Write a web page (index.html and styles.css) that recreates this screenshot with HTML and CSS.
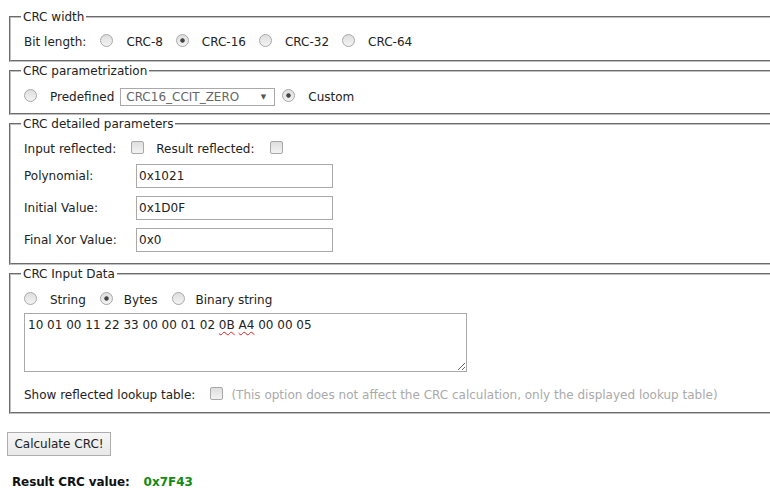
FILE: index.html
```html
<!DOCTYPE html>
<html>
<head>
<meta charset="utf-8">
<link rel="stylesheet" href="styles.css">
</head>
<body>
<fieldset class="box box-width">
  <legend>CRC width</legend>
  <div class="row">
    <span class="lbl">Bit length:</span>
    <input type="radio" class="radio first" name="w"><span>CRC-8</span>
    <input type="radio" class="radio" name="w" checked><span>CRC-16</span>
    <input type="radio" class="radio" name="w"><span>CRC-32</span>
    <input type="radio" class="radio" name="w"><span>CRC-64</span>
  </div>
</fieldset>
<fieldset class="box box-param">
  <legend>CRC parametrization</legend>
  <div class="row">
    <input type="radio" class="radio lead" name="p"><span>Predefined</span>
    <div class="select"><span class="select-text">CRC16_CCIT_ZERO</span><span class="select-arrow">▼</span></div>
    <input type="radio" class="radio after-select" name="p" checked><span>Custom</span>
  </div>
</fieldset>
<fieldset class="box box-detail">
  <legend>CRC detailed parameters</legend>
  <div class="row">
    <span>Input reflected:</span>
    <input type="checkbox" class="check c1">
    <span>Result reflected:</span>
    <input type="checkbox" class="check c2">
  </div>
  <div class="params">
    <span>Polynomial:</span><input class="field" type="text" value="0x1021">
    <span>Initial Value:</span><input class="field" type="text" value="0x1D0F">
    <span>Final Xor Value:</span><input class="field" type="text" value="0x0">
  </div>
</fieldset>
<fieldset class="box box-input">
  <legend>CRC Input Data</legend>
  <div class="row">
    <input type="radio" class="radio lead" name="d"><span>String</span>
    <input type="radio" class="radio mid" name="d" checked><span>Bytes</span>
    <input type="radio" class="radio mid" name="d"><span>Binary string</span>
  </div>
  <div class="textarea">10 01 00 11 22 33 00 00 01 02 <span class="typo">0B</span> <span class="typo">A4</span> 00 00 05</div>
  <div class="row">
    <span>Show reflected lookup table:</span>
    <input type="checkbox" class="check c3">
    <span class="note">(This option does not affect the CRC calculation, only the displayed lookup table)</span>
  </div>
</fieldset>
<button class="btn" type="button">Calculate CRC!</button>
<div class="result">
  <span class="result-label">Result CRC value:</span>
  <span class="result-value">0x7F43</span>
</div>
</body>
</html>
```
FILE: styles.css
```css
html { overflow: hidden; }
body {
  margin: 0;
  padding: 10px 0 0 7px;
  font-family: "DejaVu Sans", Verdana, sans-serif;
  font-size: 12px;
  color: #222;
  background: #fff;
}
.box {
  margin: 0 0 2px 2px;
  padding: 7px 0 9px 13px;
  width: 800px;
  box-sizing: border-box;
  border: 2px groove #c0c0c0;
  min-width: 0;
}
.box legend {
  padding: 0 2px;
  margin-left: -3px;
  line-height: 14px;
}
.box-param { padding-top: 8px; padding-bottom: 7px; }
.box-detail { padding-bottom: 11px; }
.box-input { padding-top: 8px; padding-bottom: 8px; }

.row {
  display: flex;
  align-items: center;
  height: 20px;
  white-space: nowrap;
}
.row span { padding-top: 1px; }
.radio {
  appearance: none;
  -webkit-appearance: none;
  width: 13px;
  height: 13px;
  margin: 0 13px 1px 13px;
  border: 1px solid #a8a8a8;
  border-radius: 50%;
  box-sizing: border-box;
  background: linear-gradient(#dedede, #f3f3f3);
  flex: none;
}
.radio:checked {
  background: radial-gradient(circle, #444 0, #444 1.8px, transparent 2.6px), linear-gradient(#dedede, #f3f3f3);
}
.radio.first { margin-left: 14px; }
.radio.lead { margin-left: 0; }
.radio.mid { margin-left: 14px; margin-right: 11px; }
.radio.after-select { margin-left: 7px; }

.select {
  display: flex;
  align-items: center;
  width: 155px;
  height: 18px;
  box-sizing: border-box;
  border: 1px solid #a9a9a9;
  margin-left: 6px;
  margin-top: 2px;
  padding: 0 8px 0 5px;
  color: #666;
  background: #fff;
}
.select .select-text { flex: 1; padding-top: 0; }
.select .select-arrow { font-size: 7px; color: #555; padding-top: 0; }

.check {
  appearance: none;
  -webkit-appearance: none;
  width: 13px;
  height: 13px;
  margin: 0 0 1px 0;
  border: 1px solid #a8a8a8;
  border-radius: 2px;
  box-sizing: border-box;
  background: linear-gradient(#dedede, #f3f3f3);
  flex: none;
}
.c1 { margin-left: 15px; margin-right: 12px; }
.c2 { margin-left: 16px; }
.c3 { margin-left: 15px; margin-right: 8px; }

.params {
  display: grid;
  grid-template-columns: 112px 197px;
  row-gap: 8px;
  align-items: center;
  margin-top: 6px;
}
.field {
  width: 197px;
  height: 24px;
  box-sizing: border-box;
  border: 1px solid #a9a9a9;
  padding: 0 2px;
  margin: 0;
  font: inherit;
  color: #222;
}

.textarea {
  width: 443px;
  height: 59px;
  box-sizing: border-box;
  border: 1px solid #a9a9a9;
  margin: 4px 0 12px 0;
  padding: 4px 3px 2px;
  line-height: 15px;
  overflow: auto;
  resize: both;
  white-space: nowrap;
}
.typo {
  text-decoration: underline wavy #e02020;
  text-decoration-thickness: 1px;
  text-underline-offset: 2px;
  text-decoration-skip-ink: none;
}
.note { color: #aaa; }

.btn {
  display: block;
  margin: 18px 0 0 0;
  width: 104px;
  height: 24px;
  padding: 0;
  font: inherit;
  color: #222;
  border: 1px solid #adadad;
  border-radius: 0;
  background: linear-gradient(#f6f6f6, #e8e8e8);
}

.result {
  display: flex;
  align-items: center;
  height: 20px;
  margin-top: 16px;
  padding-left: 5px;
  font-weight: bold;
}
.result-label { letter-spacing: -0.12px; color: #111; }
.result-value { margin-left: 14px; color: #138a13; }
```
